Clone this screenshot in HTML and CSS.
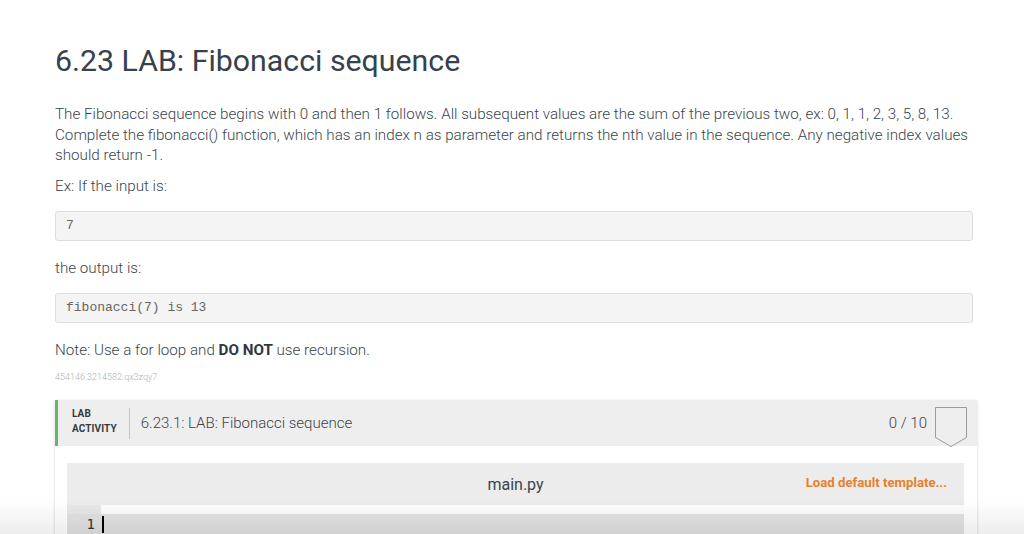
FILE: index.html
```html
<!DOCTYPE html>
<html lang="en">
<head>
<meta charset="utf-8">
<title>6.23 LAB: Fibonacci sequence</title>
<link rel="stylesheet" href="styles.css">
</head>
<body>
<main class="page">
  <h1 class="title">6.23 LAB: Fibonacci sequence</h1>
  <p class="text">The Fibonacci sequence begins with 0 and then 1 follows. All subsequent values are the sum of the previous two, ex: 0, 1, 1, 2, 3, 5, 8, 13. Complete the fibonacci() function, which has an index n as parameter and returns the nth value in the sequence. Any negative index values should return -1.</p>
  <p class="text">Ex: If the input is:</p>
  <pre class="code-box">7</pre>
  <p class="text">the output is:</p>
  <pre class="code-box">fibonacci(7) is 13</pre>
  <p class="text note">Note: Use a for loop and <strong>DO NOT</strong> use recursion.</p>
  <div class="ident">454146.3214582.qx3zqy7</div>

  <section class="lab-card">
    <header class="lab-header">
      <div class="lab-label">LAB<br>ACTIVITY</div>
      <div class="lab-divider"></div>
      <div class="lab-title">6.23.1: LAB: Fibonacci sequence</div>
      <div class="lab-score">0 / 10</div>
      <svg class="lab-badge" width="32" height="42" viewBox="0 0 32 42" aria-hidden="true">
        <polygon points="0.5,0.5 31.5,0.5 31.5,30.5 16,39.5 0.5,30.5" fill="none" stroke="#9a9a9a" stroke-width="1"/>
      </svg>
    </header>
    <div class="lab-body">
      <div class="editor">
        <div class="editor-header">
          <span class="file-name">main.py</span>
          <span class="load-template">Load default template...</span>
        </div>
        <div class="editor-top">
          <div class="gutter-pad"></div>
          <div class="code-pad"></div>
        </div>
        <div class="editor-line">
          <div class="line-no">1</div>
          <div class="line-code"><span class="cursor"></span></div>
        </div>
      </div>
    </div>
  </section>
</main>
<div class="bottom-fade"></div>
</body>
</html>
```

FILE: styles.css
```css
html, body {
  margin: 0;
  padding: 0;
  background: #ffffff;
}

body {
  font-family: Roboto, "Liberation Sans", Arial, sans-serif;
  color: #3a444e;
  overflow: hidden;
}

.page {
  padding: 43px 51px 0 55px;
}

.title {
  font-size: 30.3px;
  line-height: 36px;
  font-weight: 400;
  margin: 0 0 25px 0;
  color: #36414c;
}

.text {
  font-size: 15.2px;
  line-height: 20.5px;
  font-weight: 300;
  margin: 0 0 10px 0;
  color: #3a444e;
}

.text strong {
  font-weight: 700;
  color: #2f3942;
}

.code-box {
  margin: 15px 0 16.5px 0;
  height: 28px;
  box-sizing: content-box;
  background: #f4f4f4;
  border: 1px solid #dddddd;
  border-radius: 3px;
  padding: 0 10px;
  font-family: "Liberation Mono", "Courier New", monospace;
  font-size: 13px;
  line-height: 28px;
  color: #666666;
}

.note {
  margin-top: 0;
  margin-bottom: 11px;
}

.ident {
  font-size: 9px;
  line-height: 12px;
  color: #b0b0b0;
  font-weight: 300;
}

.lab-card {
  margin-top: 17px;
  margin-right: -4px;
  background: #ffffff;
  box-shadow: 0 1px 3px rgba(0, 0, 0, 0.18);
}

.lab-header {
  display: flex;
  align-items: center;
  height: 46px;
  background: #eeeeee;
  border-left: 3px solid #66b665;
  padding: 0 10px 0 14px;
}

.lab-label {
  font-size: 10px;
  line-height: 15px;
  font-weight: 700;
  color: #333b44;
  letter-spacing: 0.1px;
  margin-bottom: 4px;
}

.lab-divider {
  width: 1px;
  height: 31px;
  background: #c4c4c4;
  margin: 0 11px 0 12px;
}

.lab-title {
  flex: 1;
  font-size: 15px;
  font-weight: 300;
  color: #3a444e;
}

.lab-score {
  font-size: 15px;
  font-weight: 300;
  color: #3a444e;
  margin-right: 8px;
}

.lab-badge {
  display: block;
  margin-top: 9px;
}

.lab-body {
  padding: 17px 13px 0 12px;
}

.editor {
  background: #ffffff;
}

.editor-header {
  position: relative;
  height: 42px;
  background: #ececec;
  display: flex;
  align-items: center;
  justify-content: center;
}

.file-name {
  font-size: 16px;
  font-weight: 400;
  color: #3a444e;
}

.load-template {
  position: absolute;
  right: 17px;
  top: 12px;
  font-size: 13.2px;
  font-weight: 700;
  color: #e8802a;
}

.editor-top {
  display: flex;
  height: 9px;
}

.gutter-pad {
  width: 34px;
  background: #e8e8e8;
}

.code-pad {
  flex: 1;
  background: #fcfcfc;
}

.editor-line {
  display: flex;
  height: 21px;
  background: #e2e2e2;
}

.line-no {
  width: 28px;
  padding-right: 6px;
  text-align: right;
  font-family: "DejaVu Sans Mono", "Liberation Mono", monospace;
  font-size: 14px;
  line-height: 21px;
  color: #333333;
}

.line-code {
  flex: 1;
  padding-left: 1px;
  display: flex;
  align-items: center;
}

.cursor {
  display: block;
  width: 2px;
  height: 17px;
  background: #000000;
}

.bottom-fade {
  position: fixed;
  left: 0;
  right: 0;
  bottom: 0;
  height: 34px;
  pointer-events: none;
  background: linear-gradient(to bottom, rgba(0, 0, 0, 0), rgba(0, 0, 0, 0.07));
}
```
